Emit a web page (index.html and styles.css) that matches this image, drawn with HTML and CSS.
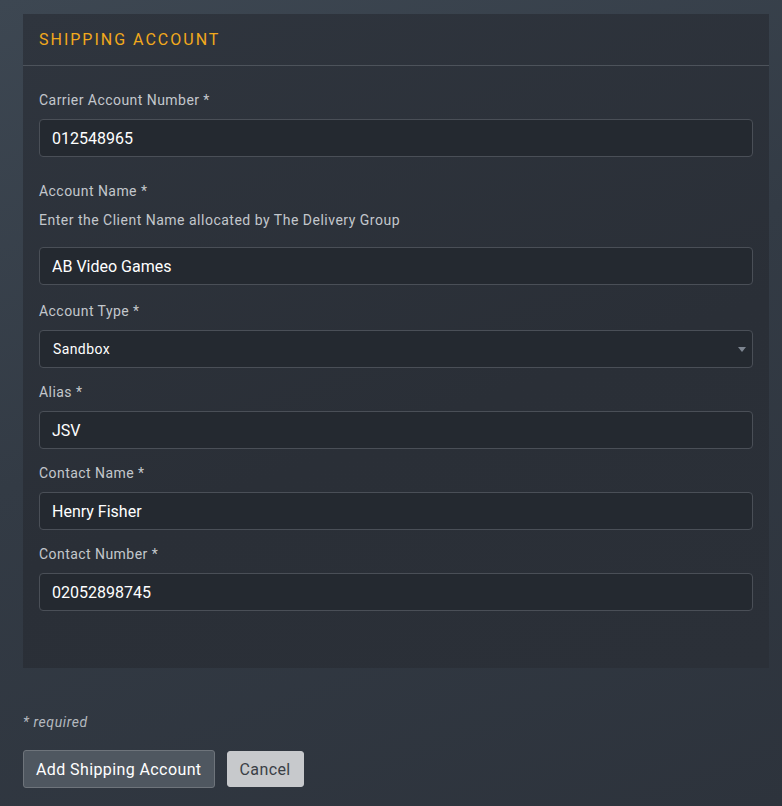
FILE: index.html
```html
<!DOCTYPE html>
<html lang="en">
<head>
    <meta charset="UTF-8">
    <meta name="viewport" content="width=device-width, initial-scale=1.0">
    <title>Shipping Account</title>
    <link rel="stylesheet" href="styles.css">
</head>
<body>
    <div class="page">
        <div class="card">
            <div class="card-header">
                <h2 class="card-title">Shipping Account</h2>
            </div>
            <div class="card-body">
                <div class="field first">
                    <label class="field-label">Carrier Account Number *</label>
                    <input class="field-input" type="text" value="012548965">
                </div>
                <div class="field">
                    <label class="field-label">Account Name *</label>
                    <p class="field-help">Enter the Client Name allocated by The Delivery Group</p>
                    <input class="field-input" type="text" value="AB Video Games">
                </div>
                <div class="field">
                    <label class="field-label">Account Type *</label>
                    <div class="select-wrap">
                        <select class="field-input field-select">
                            <option>Sandbox</option>
                            <option>Live</option>
                        </select>
                    </div>
                </div>
                <div class="field">
                    <label class="field-label">Alias *</label>
                    <input class="field-input" type="text" value="JSV">
                </div>
                <div class="field">
                    <label class="field-label">Contact Name *</label>
                    <input class="field-input" type="text" value="Henry Fisher">
                </div>
                <div class="field">
                    <label class="field-label">Contact Number *</label>
                    <input class="field-input" type="text" value="02052898745">
                </div>
            </div>
        </div>

        <p class="required-note">* required</p>

        <div class="actions">
            <button class="btn btn-primary">Add Shipping Account</button>
            <button class="btn btn-cancel">Cancel</button>
        </div>
    </div>
</body>
</html>
```

FILE: styles.css
```css
* {
    margin: 0;
    padding: 0;
    box-sizing: border-box;
}

html, body {
    height: 100%;
}

body {
    font-family: Roboto, "Liberation Sans", Arial, sans-serif;
    background: linear-gradient(160deg, #3d4752 0%, #333b45 45%, #2d333c 100%);
    color: #c3c7cc;
    overflow: hidden;
}

.page {
    padding: 14px 13px 0 23px;
}

.card {
    background: linear-gradient(160deg, #2f353e 0%, #2a2f37 60%, #2b3038 100%);
    padding-bottom: 57px;
}

.card-header {
    height: 52px;
    border-bottom: 1px solid #4d535b;
    padding: 0 16px;
    display: flex;
    align-items: center;
}

.card-title {
    color: #f2a91c;
    font-size: 16px;
    font-weight: 400;
    letter-spacing: 2px;
    text-transform: uppercase;
    margin-top: -1px;
}

.card-body {
    padding: 0 16px;
}

.field {
    margin-top: 14px;
}

.field.first {
    margin-top: 24px;
}

.field:nth-child(2) {
    margin-top: 24px;
}

.field:nth-child(3) {
    margin-top: 16px;
}

.field-label {
    display: block;
    font-size: 14px;
    line-height: 20px;
    letter-spacing: 0.45px;
    color: #c3c7cc;
    margin-bottom: 9px;
}

.field-help {
    font-size: 14px;
    line-height: 20px;
    letter-spacing: 0.5px;
    color: #c3c7cc;
    margin-bottom: 17px;
}

.field-input {
    display: block;
    width: 100%;
    height: 38px;
    background: #242930;
    border: 1px solid #4a4f57;
    border-radius: 4px;
    color: #ffffff;
    font-family: Roboto, "Liberation Sans", Arial, sans-serif;
    font-size: 16px;
    padding: 0 12px;
    outline: none;
}

.select-wrap {
    position: relative;
}

.field-select {
    appearance: none;
    -webkit-appearance: none;
    font-size: 14px;
    font-weight: 400;
    letter-spacing: 0.4px;
    padding-left: 13px;
}

.select-wrap::after {
    content: "";
    position: absolute;
    right: 7px;
    top: 17px;
    border-left: 4px solid transparent;
    border-right: 4px solid transparent;
    border-top: 5px solid #7d8590;
}

.required-note {
    margin-top: 44px;
    font-size: 14px;
    font-style: italic;
    letter-spacing: 0.6px;
    color: #b4b9bf;
    line-height: 20px;
}

.actions {
    display: flex;
    align-items: center;
    gap: 12px;
    margin-top: 18px;
}

.btn {
    font-family: Roboto, "Liberation Sans", Arial, sans-serif;
    font-size: 16px;
    letter-spacing: 0.4px;
    border-radius: 3px;
    cursor: pointer;
}

.btn-primary {
    height: 38px;
    padding: 0 12px;
    background: #4f5760;
    border: 1px solid #6e747b;
    color: #ffffff;
}

.btn-cancel {
    height: 36px;
    padding: 0 12px;
    background: #c7c9cc;
    border: 1px solid #c7c9cc;
    color: #3a3f46;
}
```
